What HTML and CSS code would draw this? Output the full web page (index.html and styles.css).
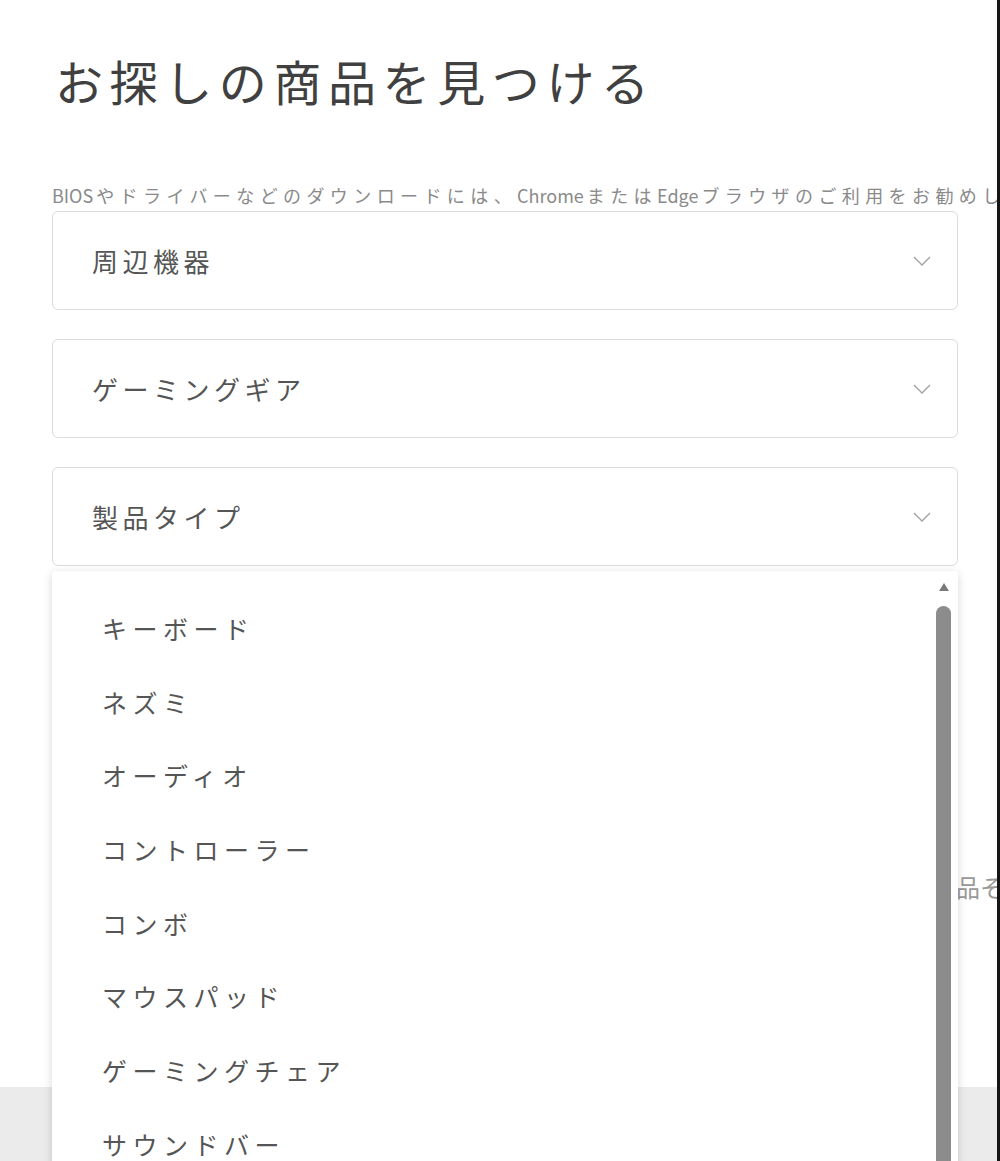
FILE: index.html
```html
<!DOCTYPE html>
<html lang="ja">
<head>
    <meta charset="UTF-8">
    <meta name="viewport" content="width=device-width, initial-scale=1.0">
    <title>お探しの商品を見つける</title>
    <link rel="stylesheet" href="styles.css">
</head>
<body>
    <div class="page">
        <main class="finder">
            <h1 class="finder-title">お探しの商品を見つける</h1>
            <p class="finder-note"><span class="lat">BIOS</span>やドライバーなどのダウンロードには、<span class="lat">Chrome</span>または<span class="lat">Edge</span>ブラウザのご利用をお勧めします。</p>

            <div class="selects">
                <div class="select">
                    <span>周辺機器</span>
                    <svg class="chev" width="18" height="10" viewBox="0 0 18 10"><polyline points="1,1 9,9 17,1" fill="none" stroke="#a0a0a0" stroke-width="1.3"/></svg>
                </div>
                <div class="select">
                    <span>ゲーミングギア</span>
                    <svg class="chev" width="18" height="10" viewBox="0 0 18 10"><polyline points="1,1 9,9 17,1" fill="none" stroke="#a0a0a0" stroke-width="1.3"/></svg>
                </div>
                <div class="select select-open">
                    <span>製品タイプ</span>
                    <svg class="chev" width="18" height="10" viewBox="0 0 18 10"><polyline points="1,1 9,9 17,1" fill="none" stroke="#a0a0a0" stroke-width="1.3"/></svg>

                    <div class="menu">
                        <ul class="menu-list">
                            <li>キーボード</li>
                            <li>ネズミ</li>
                            <li>オーディオ</li>
                            <li>コントローラー</li>
                            <li>コンボ</li>
                            <li>マウスパッド</li>
                            <li>ゲーミングチェア</li>
                            <li>サウンドバー</li>
                            <li>ヘッドセット</li>
                        </ul>
                        <div class="scroll">
                            <div class="scroll-up"></div>
                            <div class="scroll-thumb"></div>
                        </div>
                    </div>
                </div>
            </div>

            <p class="finder-hint">お探しの製品その他のサポート情報</p>
        </main>
        <footer class="page-foot"></footer>
    </div>
</body>
</html>
```

FILE: styles.css
```css
*{
    box-sizing: border-box;
}

body{
    margin: 0;
    background: #ffffff;
    font-family: "Noto Sans CJK JP", "Noto Sans", sans-serif;
    overflow: hidden;
}

.page{
    width: 1000px;
    height: 1161px;
    border-right: 3px solid #151515;
    display: flex;
    flex-direction: column;
    overflow: hidden;
}

.finder{
    height: 1087px;
    flex: none;
    padding-left: 52px;
}

.finder-title{
    margin: 48px 0 0 3px;
    font-size: 48px;
    line-height: 64px;
    font-weight: 400;
    letter-spacing: 6.6px;
    color: #404040;
}

.finder-note{
    margin: 71px 0 0;
    font-size: 18px;
    line-height: 24px;
    letter-spacing: 5.4px;
    color: #8a8a8a;
    white-space: nowrap;
}

.finder-note .lat{
    letter-spacing: 0;
    margin-right: 3px;
}

.selects{
    margin-top: 4px;
    width: 906px;
    display: flex;
    flex-direction: column;
    gap: 29px;
}

.select{
    height: 99px;
    border: 1px solid #dcdcdc;
    border-radius: 6px;
    padding: 0 26px 0 39px;
    display: flex;
    align-items: center;
    justify-content: space-between;
    font-size: 26px;
    letter-spacing: 4.5px;
    color: #555555;
}

.select-open{
    position: relative;
}

.menu{
    position: absolute;
    top: calc(100% + 6px);
    left: -1px;
    right: -1px;
    height: 640px;
    background: #ffffff;
    border-radius: 4px 4px 0 0;
    box-shadow: 0 2px 10px rgba(0, 0, 0, 0.16);
    display: flex;
    z-index: 5;
}

.menu-list{
    flex: 1;
    list-style: none;
    margin: 0;
    padding: 21px 0 0 50px;
}

.menu-list li{
    height: 73.7px;
    line-height: 73.7px;
    font-size: 25px;
    letter-spacing: 5.5px;
    color: #555555;
}

.scroll{
    width: 15px;
    margin: 12px 7px 0 0;
    display: flex;
    flex-direction: column;
    align-items: center;
}

.scroll-up{
    width: 0;
    height: 0;
    border-left: 5px solid transparent;
    border-right: 5px solid transparent;
    border-bottom: 8px solid #7a7a7a;
}

.scroll-thumb{
    margin-top: 15px;
    width: 15px;
    flex: 1;
    background: #8c8c8c;
    border-radius: 8px 8px 0 0;
}

.finder-hint{
    margin: 306px 0 0;
    padding-left: 784px;
    font-size: 24px;
    line-height: 30px;
    color: #999999;
    white-space: nowrap;
}

.page-foot{
    flex: 1;
    background: #ebebeb;
}
```
